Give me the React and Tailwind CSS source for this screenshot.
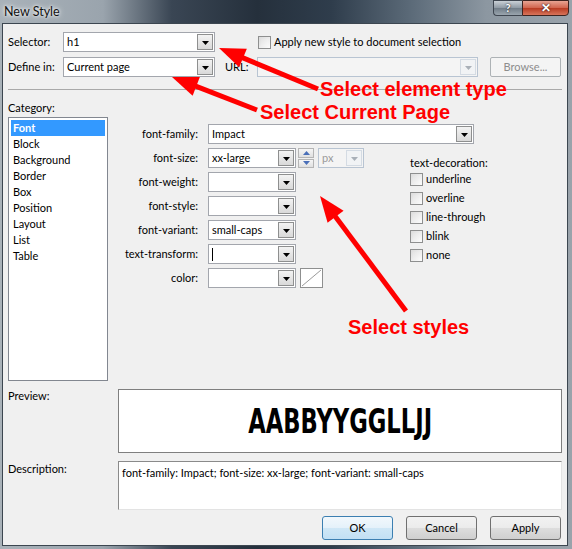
import React from 'react';

const RED = '#f00';

function DownTri({ color = '#000' }) {
  return (
    <svg width="7" height="4" viewBox="0 0 7 4">
      <path d="M0 0h7L3.5 4z" fill={color} />
    </svg>
  );
}

function Combo({ width, value, disabled, cursor }) {
  return (
    <div
      className={`flex h-[20px] shrink-0 items-stretch border ${
        disabled ? 'border-[#b8c4d2] bg-[#f4f4f4]' : 'border-[#a3a6ad] bg-white'
      }`}
      style={{ width }}
    >
      <div className={`flex flex-1 items-center pl-[3px] ${disabled ? 'text-[#9a9a9a]' : 'text-black'}`}>
        {cursor && <span className="h-[13px] w-px bg-black" />}
        {value}
      </div>
      {disabled ? (
        <div className="m-px flex w-[16px] items-center justify-center border border-[#d4dbe3] bg-[#f1f3f5] pt-px">
          <DownTri color="#a9b0b8" />
        </div>
      ) : (
        <div className="m-px flex w-[16px] items-center justify-center border border-[#8e8f8f] bg-[linear-gradient(#f3f3f3,#d9d9d9)] pt-[2px]">
          <DownTri />
        </div>
      )}
    </div>
  );
}

function Check({ label }) {
  return (
    <div className="flex items-center gap-[3px]">
      <span className="h-[13px] w-[13px] shrink-0 border border-[#8e8f8f] bg-[linear-gradient(135deg,#dcdcdc,#fdfdfd)] p-[2px]">
        <span className="block h-full w-full bg-[linear-gradient(135deg,#e4e4e4,#f8f8f8)]" />
      </span>
      <span>{label}</span>
    </div>
  );
}

function FormRow({ label, children }) {
  return (
    <div className="flex h-[20px] items-center">
      <div className="w-[80px] shrink-0 text-right">{label}</div>
      <div className="ml-[10px] flex items-center">{children}</div>
    </div>
  );
}

function Button({ children, focused }) {
  return (
    <div
      className={`flex h-[24px] w-[71px] items-center justify-center rounded-[3px] border ${
        focused
          ? 'border-[#3c7fb1] bg-[linear-gradient(#f2f8fc_0%,#e4f1fa_50%,#cfe7f6_51%,#c2e0f4_100%)]'
          : 'border-[#707070] bg-[linear-gradient(#f2f2f2_0%,#ebebeb_50%,#dddddd_51%,#cfcfcf_100%)]'
      }`}
    >
      {children}
    </div>
  );
}

function Arrow({ x1, y1, x2, y2 }) {
  const dx = x2 - x1;
  const dy = y2 - y1;
  const len = Math.hypot(dx, dy);
  const ux = dx / len;
  const uy = dy / len;
  const L = 26;
  const W = 10;
  const bx = x2 - ux * L;
  const by = y2 - uy * L;
  const nx = -uy;
  const ny = ux;
  return (
    <g>
      <line x1={x1} y1={y1} x2={bx + ux * 2} y2={by + uy * 2} stroke={RED} strokeWidth="5" />
      <polygon
        points={`${x2},${y2} ${bx + nx * W},${by + ny * W} ${bx - nx * W},${by - ny * W}`}
        fill={RED}
      />
    </g>
  );
}

const CATEGORIES = ['Font', 'Block', 'Background', 'Border', 'Box', 'Position', 'Layout', 'List', 'Table'];

export default function App() {
  return (
    <div className="relative h-[549px] w-[572px] overflow-hidden bg-[linear-gradient(90deg,#a9b2b9_0%,#9aa4ad_18%,#3a4654_30%,#25303c_45%,#2f3d4c_58%,#5c6b79_72%,#8c97a1_85%,#9aa3ab_100%)] font-['Lato',sans-serif] text-[11px] text-black">
      {/* title bar */}
      <div className="flex h-[23px] items-start">
        <div className="pl-[4px] pt-[3px] text-[12.5px] text-[#111] [text-shadow:0_0_6px_#fff,0_0_3px_#fff]">
          New Style
        </div>
        <div className="ml-auto mr-[3px] flex">
          <div className="flex h-[16px] w-[29px] items-center justify-center rounded-bl-[4px] border border-r-0 border-[#3e4650] bg-[linear-gradient(#c9d0d6,#8e99a3_50%,#707c87_51%,#9aa5ae)] text-[11px] font-bold text-white [text-shadow:0_0_2px_#000]">
            ?
          </div>
          <div className="flex h-[16px] w-[47px] items-center justify-center rounded-br-[4px] border border-[#3e2420] bg-[linear-gradient(#e8a493,#d0634c_50%,#b83b22_51%,#d8745a)] text-[12px] font-bold text-white [text-shadow:0_0_2px_#000]">
            ✕
          </div>
        </div>
      </div>

      {/* client area */}
      <div className="ml-[2px] h-[523px] w-[566px] border border-[#3c4650] bg-[#f0f0f0] pl-[5px] pr-[5px] pt-[8px]">
        {/* selector row */}
        <div className="flex h-[20px] items-center">
          <div className="w-[55px] shrink-0">Selector:</div>
          <Combo width={152} value="h1" />
          <div className="ml-[43px]">
            <Check label="Apply new style to document selection" />
          </div>
        </div>

        {/* define in row */}
        <div className="mt-[5px] flex h-[20px] items-center">
          <div className="w-[55px] shrink-0">Define in:</div>
          <Combo width={152} value="Current page" />
          <div className="ml-[10px] w-[32px] shrink-0">URL:</div>
          <Combo width={221} disabled />
          <div className="ml-[12px] flex h-[20px] w-[71px] items-center justify-center rounded-[2px] border border-[#adb2b5] bg-[#f4f4f4] text-[#8d8d8d]">
            Browse...
          </div>
        </div>

        <div className="mt-[12px] h-px bg-[#a9a9a9]" />

        {/* main */}
        <div className="mt-[10px] flex">
          <div className="w-[100px] shrink-0">
            <div className="h-[16px] leading-[16px]">Category:</div>
            <div className="mt-px h-[264px] border border-[#828790] bg-white p-[2px]">
              {CATEGORIES.map((c, i) => (
                <div
                  key={c}
                  className={`h-[16px] pl-[2px] leading-[16px] ${i === 0 ? 'bg-[#3399ff] font-bold text-white' : ''}`}
                >
                  {c}
                </div>
              ))}
            </div>
          </div>

          <div className="ml-[10px] flex-1 pt-[24px]">
            <FormRow label="font-family:">
              <Combo width={266} value="Impact" />
            </FormRow>
            <div className="mt-[4px] flex">
              <div className="flex flex-col gap-[4px]">
                <FormRow label="font-size:">
                  <Combo width={88} value="xx-large" />
                  <div className="ml-[2px] flex h-[20px] w-[16px] flex-col gap-px">
                    <div className="flex flex-1 items-center justify-center border border-[#b5b5b5] bg-[linear-gradient(#f6f6f6,#e0e0e0)]">
                      <svg width="7" height="4" viewBox="0 0 7 4">
                        <path d="M0 4h7L3.5 0z" fill="#4a6fb8" />
                      </svg>
                    </div>
                    <div className="flex flex-1 items-center justify-center border border-[#b5b5b5] bg-[linear-gradient(#f6f6f6,#e0e0e0)]">
                      <DownTri color="#4a6fb8" />
                    </div>
                  </div>
                  <div className="ml-[4px]">
                    <Combo width={46} value="px" disabled />
                  </div>
                </FormRow>
                <FormRow label="font-weight:">
                  <Combo width={88} />
                </FormRow>
                <FormRow label="font-style:">
                  <Combo width={88} />
                </FormRow>
                <FormRow label="font-variant:">
                  <Combo width={88} value="small-caps" />
                </FormRow>
                <FormRow label="text-transform:">
                  <Combo width={88} cursor />
                </FormRow>
                <FormRow label="color:">
                  <Combo width={88} />
                  <div className="ml-[4px] h-[20px] w-[23px] border border-[#8e8f8f] bg-white">
                    <svg width="21" height="18" viewBox="0 0 21 18">
                      <path d="M1 17L20 1" stroke="#9a9a9a" strokeWidth="1" />
                    </svg>
                  </div>
                </FormRow>
              </div>

              <div className="ml-[46px] mt-[8px]">
                <div className="h-[14px] leading-[14px]">text-decoration:</div>
                {['underline', 'overline', 'line-through', 'blink', 'none'].map((d) => (
                  <div key={d} className="flex h-[19px] items-center">
                    <Check label={d} />
                  </div>
                ))}
              </div>
            </div>
          </div>
        </div>

        {/* preview */}
        <div className="mt-[8px] flex">
          <div className="w-[110px] shrink-0 leading-[14px]">Preview:</div>
          <div className="flex h-[64px] w-[444px] items-center justify-center overflow-hidden border border-[#7f7f7f] bg-white">
            <span className="scale-x-[0.74] font-['Impact','DejaVu_Sans_Condensed','DejaVu_Sans',sans-serif] text-[34px] font-bold leading-none text-black">
              AABBYYGGLLJJ
            </span>
          </div>
        </div>

        {/* description */}
        <div className="mt-[8px] flex">
          <div className="w-[110px] shrink-0 pt-[1px] leading-[14px]">Description:</div>
          <div className="h-[49px] w-[444px] border border-b-[#e3e3e3] border-l-[#8a8a8a] border-r-[#e3e3e3] border-t-[#8a8a8a] bg-white pl-[3px] pt-[3px]">
            font-family: Impact; font-size: xx-large; font-variant: small-caps
          </div>
        </div>

        {/* buttons */}
        <div className="mt-[6px] flex justify-end gap-[13px] pr-px">
          <Button focused>OK</Button>
          <Button>Cancel</Button>
          <Button>Apply</Button>
        </div>
      </div>

      {/* red annotations */}
      <svg className="pointer-events-none absolute left-0 top-0" width="572" height="549">
        <Arrow x1={318} y1={89} x2={219} y2={48} />
        <Arrow x1={257} y1={110} x2={172} y2={77} />
        <Arrow x1={406} y1={311} x2={320} y2={196} />
      </svg>
      <div className="pointer-events-none absolute left-[320px] top-[77px] font-['Liberation_Sans',Arial,sans-serif] text-[20px] font-bold leading-[24px] text-[#f00]">
        Select element type
      </div>
      <div className="pointer-events-none absolute left-[260px] top-[100px] font-['Liberation_Sans',Arial,sans-serif] text-[20px] font-bold leading-[24px] text-[#f00]">
        Select Current Page
      </div>
      <div className="pointer-events-none absolute left-[348px] top-[315px] font-['Liberation_Sans',Arial,sans-serif] text-[20px] font-bold leading-[24px] text-[#f00]">
        Select styles
      </div>
    </div>
  );
}
